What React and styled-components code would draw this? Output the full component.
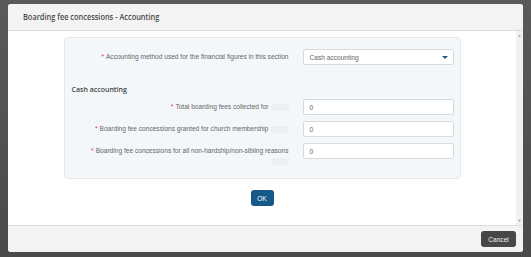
import React from 'react';
import styled, { createGlobalStyle } from 'styled-components';

const GlobalStyle = createGlobalStyle`
  html, body {
    margin: 0;
    padding: 0;
    background: #4f4f4f;
    font-family: "Liberation Sans", Arial, sans-serif;
  }
  * { box-sizing: border-box; }
`;

const Backdrop = styled.div`
  width: 531px;
  height: 257px;
  padding: 4px 8px 5px 8px;
  background: linear-gradient(#5a5a5a, #4a4a4a);
`;

const Modal = styled.div`
  width: 515px;
  height: 248px;
  display: flex;
  flex-direction: column;
  background: #fff;
  border-radius: 3px;
  overflow: hidden;
`;

const Header = styled.div`
  height: 27px;
  flex: none;
  display: flex;
  align-items: center;
  padding-left: 15px;
  background: #f3f3f3;
  border-bottom: 1px solid #dcdcdc;
`;

const Title = styled.h1`
  margin: 0;
  font-family: "Open Sans", sans-serif;
  font-size: 7.4px;
  font-weight: 600;
  color: #4a4a4a;
  transform: scaleY(1.12);
`;

const BodyWrap = styled.div`
  flex: 1;
  display: flex;
  min-height: 0;
`;

const Body = styled.div`
  flex: 1;
  display: flex;
  flex-direction: column;
  align-items: center;
  padding-top: 6px;
`;

const Scrollbar = styled.div`
  width: 7px;
  flex: none;
  background: #f1f1f1;
  display: flex;
  flex-direction: column;
  justify-content: space-between;
  align-items: center;
  padding: 3px 0 2px;
  font-size: 4px;
  color: #999;
  line-height: 1;
`;

const Panel = styled.div`
  width: 397px;
  height: 142px;
  background: #f4f7fa;
  border: 1px solid #e3e8ed;
  border-radius: 4px;
  padding: 11px 8px 0 7px;
`;

const Row = styled.div`
  display: grid;
  grid-template-columns: 217px 151px;
  column-gap: 14px;
  align-items: start;
  margin-bottom: ${p => p.$gap || 6}px;
`;

const Label = styled.div`
  text-align: right;
  font-size: 6.6px;
  line-height: 10px;
  color: #666;
  padding-top: 3px;
`;

const Req = styled.span`
  color: #e23b3b;
  margin-right: 2px;
`;

const Blur = styled.span`
  display: inline-block;
  width: ${p => p.$w || 16}px;
  height: 7px;
  vertical-align: middle;
  margin-left: 2px;
  border-radius: 3px;
  background: #eceef1;
`;

const Field = styled.div`
  height: 16px;
  background: #fff;
  border: 1px solid #d6dbe0;
  border-radius: 2px;
  display: flex;
  align-items: center;
  justify-content: space-between;
  padding: 0 5px 0 6px;
  font-size: 6.6px;
  color: #666;
`;

const Caret = styled.span`
  width: 0;
  height: 0;
  border-left: 3px solid transparent;
  border-right: 3px solid transparent;
  border-top: 3px solid #1d5b8f;
  margin-top: 1px;
`;

const Section = styled.h2`
  margin: 0 0 5px;
  font-family: "Open Sans", sans-serif;
  font-size: 7px;
  font-weight: 600;
  color: #444;
`;

const OkButton = styled.button`
  margin-top: 11px;
  width: 23px;
  height: 16px;
  border: none;
  border-radius: 3px;
  background: #16588a;
  color: #fff;
  font-family: "Liberation Sans", sans-serif;
  font-size: 6.6px;
  padding: 0;
`;

const Footer = styled.div`
  height: 27px;
  flex: none;
  display: flex;
  align-items: center;
  justify-content: flex-end;
  padding-right: 7px;
  background: #f3f3f3;
  border-top: 1px solid #dcdcdc;
`;

const CancelButton = styled.button`
  width: 35px;
  height: 16px;
  border: none;
  border-radius: 3px;
  background: #474747;
  color: #f0f0f0;
  font-family: "Liberation Sans", sans-serif;
  font-size: 6.6px;
  padding: 0;
`;

const rows = [
  { label: 'Total boarding fees collected for', blur: 18 },
  { label: 'Boarding fee concessions granted for church membership', blur: 18 },
  { label: 'Boarding fee concessions for all non-hardship/non-sibling reasons', blur: 18, wrap: true },
];

export default function App() {
  return (
    <>
      <GlobalStyle />
      <Backdrop>
        <Modal>
          <Header>
            <Title>Boarding fee concessions - Accounting</Title>
          </Header>
          <BodyWrap>
            <Body>
              <Panel>
                <Row $gap={20}>
                  <Label><Req>*</Req>Accounting method used for the financial figures in this section</Label>
                  <Field>Cash accounting<Caret /></Field>
                </Row>
                <Section>Cash accounting</Section>
                {rows.map((r, i) => (
                  <Row key={i}>
                    <Label>
                      <Req>*</Req>{r.label}
                      {r.wrap ? <><br /><Blur $w={r.blur} /></> : <Blur $w={r.blur} />}
                    </Label>
                    <Field>0</Field>
                  </Row>
                ))}
              </Panel>
              <OkButton>OK</OkButton>
            </Body>
            <Scrollbar>
              <span>▲</span>
              <span>▼</span>
            </Scrollbar>
          </BodyWrap>
          <Footer>
            <CancelButton>Cancel</CancelButton>
          </Footer>
        </Modal>
      </Backdrop>
    </>
  );
}
